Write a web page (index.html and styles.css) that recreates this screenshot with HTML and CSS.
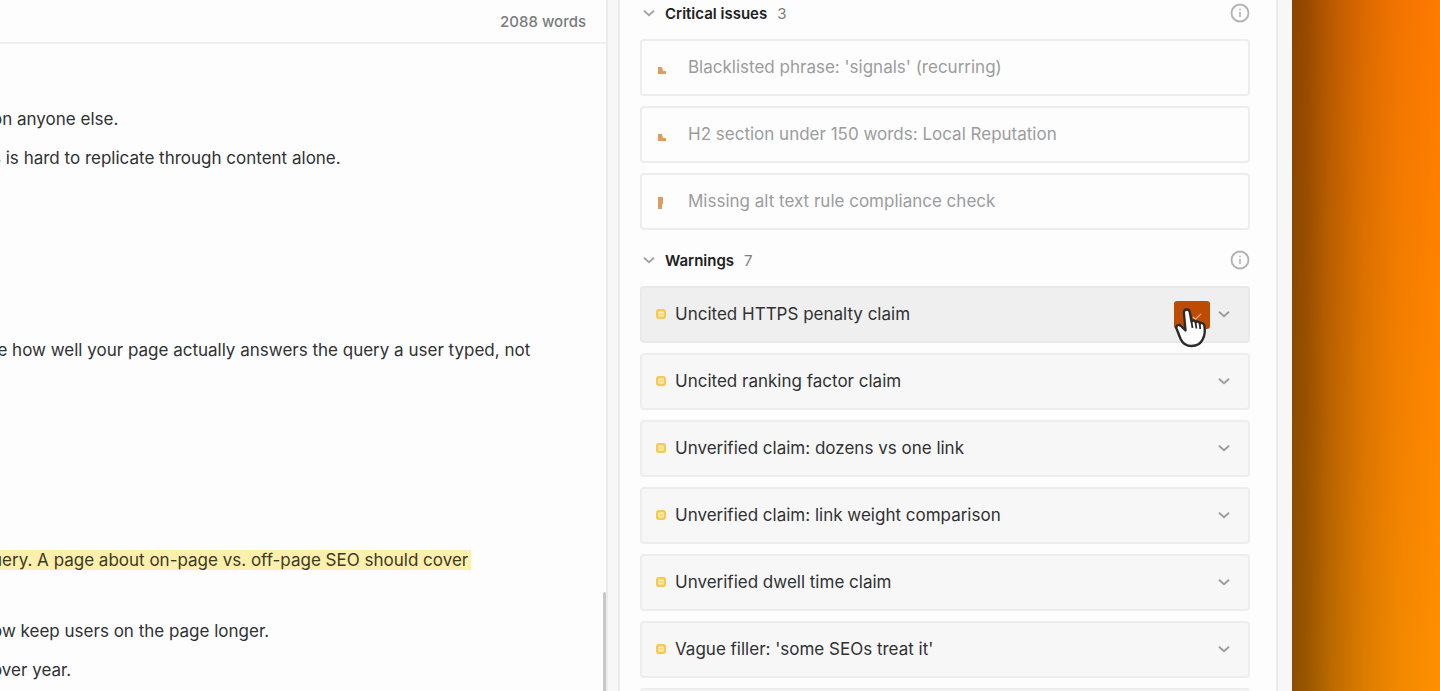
FILE: index.html
```html
<!DOCTYPE html>
<html lang="en">
<head>
<meta charset="utf-8">
<title>Content editor</title>
<link rel="stylesheet" href="styles.css">
</head>
<body>
<svg class="defs" aria-hidden="true">
  <symbol id="chevron" viewBox="0 0 12 12"><path d="M1 3.800 6 8.200l5-4.400" fill="none" stroke="currentColor" stroke-width="1.800"/></symbol>
  <symbol id="info" viewBox="0 0 20 20"><circle cx="10" cy="10" r="8.500" fill="none" stroke="currentColor" stroke-width="1.800"/><path d="M10 9v5M10 5.800v1.500" fill="none" stroke="currentColor" stroke-width="1.600"/></symbol>
  <symbol id="corner" viewBox="0 0 8 8"><path d="M0 0h4l1 4h3v3H0z" fill="currentColor"/></symbol>
  <symbol id="bang" viewBox="0 0 5 12"><path d="M0 0h5v7H0zM0 7h4v5H0z" fill="currentColor"/></symbol>
  <symbol id="note" viewBox="0 0 10 10"><rect x="1.200" y="1.200" width="7.600" height="7.600" rx="1.500" fill="#fff3c4" stroke="currentColor" stroke-width="2.400"/><path d="M3 5h4" stroke="currentColor" stroke-width="1.200"/></symbol>
</svg>
<div class="app">
  <main class="editor">
    <header class="editor-bar"><span>2088 words</span></header>
    <article class="prose">
      <p>on anyone else.</p>
      <p class="gap-l">s is hard to replicate through content alone.</p>
      <p class="gap-m">te how well your page actually answers the query a user typed, not</p>
      <p class="gap-s"><mark>uery. A page about on-page vs. off-page SEO should cover</mark></p>
      <p>ow keep users on the page longer.</p>
      <p>over year.</p>
    </article>
    <div class="scroll-thumb"></div>
  </main>
  <div class="divider"></div>
  <aside class="panel">
    <section class="group">
      <header class="group-head">
        <button class="toggle"><svg class="chev"><use href="#chevron"/></svg><b>Critical issues</b><span>3</span></button>
        <button class="info" aria-label="About critical issues"><svg><use href="#info"/></svg></button>
      </header>
      <ul class="list">
        <li class="card done"><svg class="corner"><use href="#corner"/></svg><span>Blacklisted phrase: 'signals' (recurring)</span></li>
        <li class="card done"><svg class="corner"><use href="#corner"/></svg><span>H2 section under 150 words: Local Reputation</span></li>
        <li class="card done"><svg class="bang"><use href="#bang"/></svg><span>Missing alt text rule compliance check</span></li>
      </ul>
    </section>
    <section class="group">
      <header class="group-head">
        <button class="toggle"><svg class="chev"><use href="#chevron"/></svg><b>Warnings</b><span>7</span></button>
        <button class="info" aria-label="About warnings"><svg><use href="#info"/></svg></button>
      </header>
      <ul class="list">
        <li class="card warn active"><svg class="note"><use href="#note"/></svg><span>Uncited HTTPS penalty claim</span>
          <button class="fix" aria-label="Fix"><svg class="check" viewBox="0 0 12 10"><path d="M1 5l3 3 7-7" fill="none" stroke="#f3b58a" stroke-width="1.500"/></svg>
            <svg class="hand" viewBox="0 0 34 42"><path d="M13 2.500c1.700 0 2.600 1.200 2.900 3l1.600 9c.8-1.500 3.600-1.300 4.100.8 1-1.300 3.700-.8 4.200 1.300 1.200-1.200 4-.6 4.500 1.800 1 5 .6 9.600-1.600 13.900-2 4.700-5.800 6.700-11.200 6.700-5.800 0-9-2.800-11-7.300L2.500 21.500c-1-3 2.300-4.700 4.500-2.500l4.500 4.500-1.600-17.500c-.2-2.200 1-3.500 3.100-3.500z" fill="#fff" stroke="#2b2b2b" stroke-width="2.400" stroke-linejoin="round"/><path d="M17.500 14.500l1 6.500M21.600 15.500l.8 6M25.800 17l.4 5" fill="none" stroke="#2b2b2b" stroke-width="1.800"/></svg></button>
          <button class="expand" aria-label="Expand"><svg class="chev"><use href="#chevron"/></svg></button></li>
        <li class="card warn"><svg class="note"><use href="#note"/></svg><span>Uncited ranking factor claim</span><button class="expand" aria-label="Expand"><svg class="chev"><use href="#chevron"/></svg></button></li>
        <li class="card warn"><svg class="note"><use href="#note"/></svg><span>Unverified claim: dozens vs one link</span><button class="expand" aria-label="Expand"><svg class="chev"><use href="#chevron"/></svg></button></li>
        <li class="card warn"><svg class="note"><use href="#note"/></svg><span>Unverified claim: link weight comparison</span><button class="expand" aria-label="Expand"><svg class="chev"><use href="#chevron"/></svg></button></li>
        <li class="card warn"><svg class="note"><use href="#note"/></svg><span>Unverified dwell time claim</span><button class="expand" aria-label="Expand"><svg class="chev"><use href="#chevron"/></svg></button></li>
        <li class="card warn"><svg class="note"><use href="#note"/></svg><span>Vague filler: 'some SEOs treat it'</span><button class="expand" aria-label="Expand"><svg class="chev"><use href="#chevron"/></svg></button></li>
        <li class="card warn"></li>
      </ul>
    </section>
  </aside>
  <div class="edge"></div>
  <div class="backdrop"></div>
</div>
</body>
</html>
```
FILE: styles.css
```css
* { box-sizing: border-box; }
body { margin: 0; font-family: Inter, "Liberation Sans", sans-serif; background: #fdfdfe; color: #303131; overflow: hidden; }
button { border: 0; padding: 0; background: none; font: inherit; color: inherit; display: flex; align-items: center; }
svg { display: block; flex: none; }
.defs { position: absolute; width: 0; height: 0; }
.app { display: flex; height: 100vh; overflow: hidden; }

.editor { flex: 1; min-width: 0; position: relative; overflow: hidden; }
.editor-bar { height: 44px; display: flex; align-items: center; justify-content: flex-end; padding-right: 20px; border-bottom: 2px solid #efeff0; font-size: 15px; font-weight: 500; color: #7a7b7b; }
.prose { margin-left: -8px; padding-top: 56px; font-size: 17px; line-height: 39px; white-space: nowrap; }
.prose p { margin: 0; }
.prose .gap-l { margin-bottom: 153px; }
.prose .gap-m { margin-bottom: 171px; }
.prose .gap-s { margin-bottom: 32px; }
.prose mark { background: #fdf0ac; color: #3c3927; padding-right: 3px; }
.scroll-thumb { position: absolute; right: 0; bottom: 0; width: 3px; height: 99px; background: #c8c8c9; border-radius: 2px 2px 0 0; }
.divider { width: 14px; background: #f7f7f8; border: 2px solid #ececed; border-width: 0 2px; }

.panel { width: 46%; max-width: 656px; padding: 0 26px 0 20px; overflow: hidden; }
.group { margin-bottom: 17px; }
.group-head { height: 26px; margin-bottom: 13px; display: flex; align-items: center; justify-content: space-between; font-size: 15px; }
.toggle { gap: 10px; padding-left: 3px; }
.toggle b { font-weight: 600; color: #202121; }
.toggle span { color: #7e7f7f; }
.toggle .chev { color: #a3a3a4; }
.chev { width: 12px; height: 12px; }
.info { color: #b1b1b2; }
.info svg { width: 20px; height: 20px; }
.list { list-style: none; margin: 0; padding: 0; display: grid; gap: 10px; }
.card { min-height: 57px; display: flex; align-items: center; border: 2px solid #ededee; border-radius: 4px; padding: 0 18px 2px 14px; font-size: 17px; }
.done { color: #9b9c9c; padding-left: 16px; }
.done svg { color: #df9c62; margin-right: 22px; }
.corner { width: 8px; height: 8px; margin-top: 8px; }
.done .bang { width: 5px; height: 12px; margin: 4px 25px 0 0; }
.warn { background: #f7f7f8; }
.warn.active { background: #efeff0; border-color: #e9e9ea; }
.note { width: 10px; height: 10px; margin-right: 9px; color: #f6ca50; }
.expand { margin-left: auto; color: #9a9b9b; }
.fix { margin: 2px 8px 0 auto; width: 36px; height: 28px; border-radius: 3px; background: #bd4b02; position: relative; }
.fix + .expand { margin-left: 0; }
.check { width: 10px; height: 8px; margin: 4px 0 0 18px; }
.hand { position: absolute; left: 0; top: 6px; width: 34px; height: 42px; }

.edge { width: 16px; background: #f7f7f8; border-left: 2px solid #ececed; }
.backdrop { width: 148px; background: linear-gradient(90deg, rgba(0, 0, 0, .45), rgba(0, 0, 0, .4) 10%, rgba(0, 0, 0, .28) 25%, rgba(0, 0, 0, .14) 48%, rgba(0, 0, 0, .05) 72%, transparent), linear-gradient(#ff7a00, #ff9000); }
```
